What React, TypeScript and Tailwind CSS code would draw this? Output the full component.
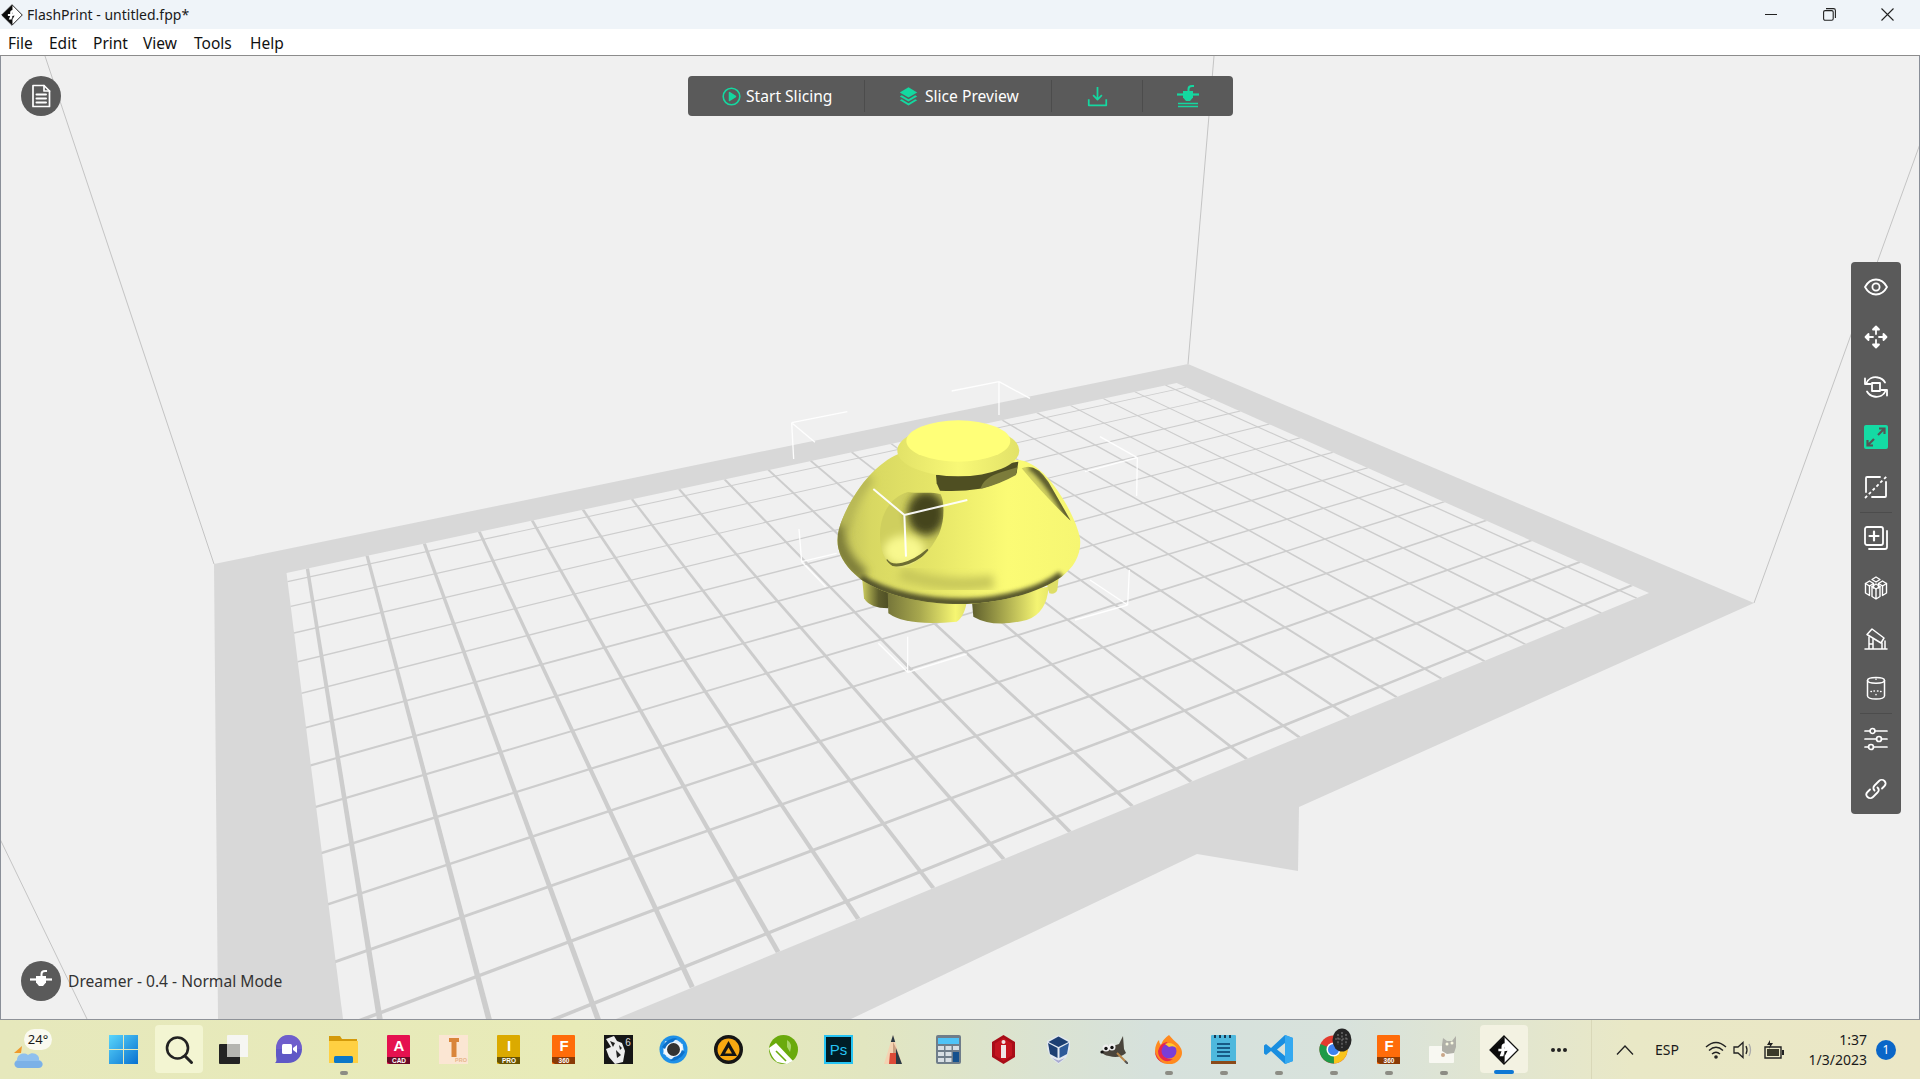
import React from "react";

const G = 0.4371, H = -0.4713;
const P = (u: number, v: number) => {
  const w = 1 + G * u + H * v;
  return [(1404.4 * u - 98.3 * v + 286.5) / w, (-22.6 * u + 22.3 * v + 573) / w];
};
const quad = (u0: number, v0: number, u1: number, v1: number) =>
  [P(u0, v0), P(u1, v0), P(u1, v1), P(u0, v1)].map((p) => `${p[0].toFixed(1)},${p[1].toFixed(1)}`).join(" ");
const uLines = Array.from({ length: 21 }, (_, k) => 0.0165 + 0.0483 * k);
const vLines = Array.from({ length: 13 }, (_, k) => 0.0294 + 0.0788 * k);

const BOX = [
  "M717 65L575 93M717 65L810 115M717 65L717 165",
  "M95 188L262 155M95 188L165 247M95 188L101 297",
  "M1132 293L1020 230M1132 293L975 335M1132 293L1130 408",
  "M125 605L117 507M125 605L230 580M125 605L197 680",
  "M1103 735L1108 630M1103 735L990 660M1103 735L945 780",
  "M443 937L443 830M443 937L355 850M443 937L620 882",
];

const DOME = "M415 282C350 310 290 380 250 470C235 505 228 535 235 565C245 610 280 640 305 660C380 710 500 735 620 732C740 728 850 690 905 650C945 620 965 580 960 535C950 480 900 390 850 340C820 310 790 300 775 300Z";
const HOLE = "M360 525C360 460 395 408 445 396C480 402 515 394 542 403C555 430 554 480 537 522C512 572 472 614 418 628C383 617 360 585 360 525Z";
const RHOLE = "M785 325Q825 305 865 365L932 482Q860 415 785 325Z";

function Model() {
  return (
    <g transform="translate(760 360) scale(0.33333)">
      <path d="M305 640L312 715Q330 745 385 745L400 690Z" fill="url(#f1)" />
      <path d="M383 690L385 760Q440 800 590 785Q615 770 622 715Z" fill="url(#f2)" />
      <path d="M635 715L640 770Q700 805 800 780Q860 760 866 680Z" fill="url(#f3)" />
      <path d="M860 670L868 700Q885 705 892 690L897 645Z" fill="#dede66" />
      <path d={DOME} fill="url(#dome)" />
      <g clipPath="url(#domeClip)">
        <path d="M240 480C225 530 235 590 310 650" fill="none" stroke="#7c7c38" strokeWidth="42" filter="url(#b12)" />
        <path d="M300 655C380 705 500 730 620 728C740 724 850 690 905 645" fill="none" stroke="#55552a" strokeWidth="26" filter="url(#b6)" />
        <path d="M330 350C290 390 262 450 250 500" fill="none" stroke="#b6b654" strokeWidth="36" filter="url(#b12)" />
        <path d="M420 640C500 670 600 680 700 665" fill="none" stroke="#c8c85a" strokeWidth="40" filter="url(#b12)" />
      </g>
      <path d={HOLE} fill="#cfcf5e" />
      <g clipPath="url(#holeClip)">
        <ellipse cx="498" cy="460" rx="56" ry="66" fill="#45451f" filter="url(#b12)" />
        <ellipse cx="432" cy="572" rx="62" ry="46" fill="#f8f88e" filter="url(#b12)" />
        <path d="M378 600C395 627 450 617 505 570" fill="none" stroke="#6d6d32" strokeWidth="9" filter="url(#b2)" />
      </g>
      <path d="M528 345L775 305L770 340Q720 372 660 386Q600 396 540 392L530 370Z" fill="#4f4f22" />
      <path d="M662 384Q672 352 725 336L772 322L768 345Q720 372 665 386Z" fill="#7c7c3a" filter="url(#b2)" />
      <path d={RHOLE} fill="#d0d060" />
      <g clipPath="url(#rholeClip)">
        <path d="M810 318Q860 350 935 490" fill="none" stroke="#56562a" strokeWidth="22" filter="url(#b6)" />
      </g>
      <ellipse cx="595" cy="272" rx="183" ry="77" fill="url(#rim)" />
      <ellipse cx="595" cy="243" rx="156" ry="62" fill="#ffff78" />
      <g stroke="#ffffff" fill="none" opacity="0.95">
        {BOX.map((d) => (
          <path key={d} d={d} strokeWidth="4" />
        ))}
        <path d="M433 465L340 387M433 465L622 420M433 465L438 590" strokeWidth="6" />
      </g>
    </g>
  );
}

function Scene() {
  return (
    <svg viewBox="0 56 1920 963" className="absolute -left-px top-0 w-[1920px] h-[963px]">
      <defs>
        <filter id="b2" x="-30%" y="-30%" width="160%" height="160%"><feGaussianBlur stdDeviation="2" /></filter>
        <filter id="b6" x="-30%" y="-30%" width="160%" height="160%"><feGaussianBlur stdDeviation="6" /></filter>
        <filter id="b12" x="-50%" y="-50%" width="200%" height="200%"><feGaussianBlur stdDeviation="13" /></filter>
        <clipPath id="domeClip"><path d={DOME} /></clipPath>
        <clipPath id="holeClip"><path d={HOLE} /></clipPath>
        <clipPath id="rholeClip"><path d={RHOLE} /></clipPath>
        <linearGradient id="dome" gradientUnits="userSpaceOnUse" x1="232" y1="0" x2="960" y2="0">
          <stop offset="0" stopColor="#c0c05a" />
          <stop offset="0.14" stopColor="#d8d862" />
          <stop offset="0.4" stopColor="#e6e668" />
          <stop offset="0.7" stopColor="#fbfb75" />
          <stop offset="1" stopColor="#f6f672" />
        </linearGradient>
        <linearGradient id="f1" gradientUnits="userSpaceOnUse" x1="305" y1="0" x2="390" y2="0">
          <stop offset="0" stopColor="#d2d260" />
          <stop offset="0.6" stopColor="#5e5e2c" />
          <stop offset="1" stopColor="#4c4c24" />
        </linearGradient>
        <linearGradient id="f2" gradientUnits="userSpaceOnUse" x1="385" y1="0" x2="622" y2="0">
          <stop offset="0" stopColor="#77773a" />
          <stop offset="0.4" stopColor="#a8a84e" />
          <stop offset="0.85" stopColor="#f6f672" />
          <stop offset="1" stopColor="#e0e068" />
        </linearGradient>
        <linearGradient id="f3" gradientUnits="userSpaceOnUse" x1="635" y1="0" x2="866" y2="0">
          <stop offset="0" stopColor="#5e5e2c" />
          <stop offset="0.4" stopColor="#a5a54c" />
          <stop offset="0.85" stopColor="#f4f472" />
          <stop offset="1" stopColor="#e8e86a" />
        </linearGradient>
        <linearGradient id="rim" gradientUnits="userSpaceOnUse" x1="412" y1="0" x2="778" y2="0">
          <stop offset="0" stopColor="#e2e268" />
          <stop offset="0.5" stopColor="#f8f876" />
          <stop offset="1" stopColor="#e2e268" />
        </linearGradient>
      </defs>
      <rect x="0" y="56" width="1920" height="963" fill="#f0f0f0" />
      <g stroke="#c4c4c4" strokeWidth="1" fill="none">
        <path d="M45 56L214 564" />
        <path d="M1214 56L1188 364" />
        <path d="M1754 603L1920 144" />
        <path d="M0 839L87 1019" />
      </g>
      <path d="M214 564L1188 364L1754 603L1299 807L1298 871L1197 854L851 1019L218 1019Z" fill="#d8d8d8" />
      <path d="M286.5 573L1176.6 383L1649 593L616 1019L343 1019Z" fill="#f0f0f0" />
      <g fill="#cdcdcd">
        {uLines.map((u) => (
          <polygon key={u} points={quad(u - 0.0013, 0, u + 0.0013, 1)} />
        ))}
        {vLines.map((v) => (
          <polygon key={v} points={quad(0, v - 0.002, 1, v + 0.002)} />
        ))}
      </g>
      <Model />
    </svg>
  );
}

const Ic = ({ children, s = 24, c = "#fff", w = 1.8 }: { children: React.ReactNode; s?: number; c?: string; w?: number }) => (
  <svg width={s} height={s} viewBox="0 0 24 24" fill="none" stroke={c} strokeWidth={w} strokeLinecap="round" strokeLinejoin="round">
    {children}
  </svg>
);

const HeadIcon = ({ c, lines }: { c: string; lines?: boolean }) => (
  <svg width="24" height="24" viewBox="0 0 24 24" fill="none">
    <path d="M1 10.5H23" stroke={c} strokeWidth="2.2" />
    <path d="M7 7H17V13.5L14 17H10L7 13.5Z" fill={c} />
    <path d="M12.5 8V5Q12.5 2 16 2H18" stroke={c} strokeWidth="2" />
    {lines && <path d="M2 19.5H22M2 22.5H22" stroke={c} strokeWidth="1.3" />}
  </svg>
);

const SIDE: React.ReactNode[] = [
  <Ic key="eye"><path d="M1 12C4 6.5 8 4.5 12 4.5S20 6.5 23 12C20 17.5 16 19.5 12 19.5S4 17.5 1 12Z" /><circle cx="12" cy="12" r="3.6" /></Ic>,
  <Ic key="move"><path d="M12 4V9M12 15V20M4 12H9M15 12H20" /><path d="M9 4.5L12 1.5L15 4.5Z M9 19.5L12 22.5L15 19.5Z M4.5 9L1.5 12L4.5 15Z M19.5 9L22.5 12L19.5 15Z" fill="#fff" /></Ic>,
  <Ic key="rot"><rect x="8" y="8" width="8" height="8" /><path d="M2 9C4 3.5 9 1.5 14 2.5C17 3 19.5 5 21 7.5M22 15C20 20.5 15 22.5 10 21.5C7 21 4.5 19 3 16.5" /><path d="M1 3.5V9H6.5M23 20.5V15H17.5" /></Ic>,
  <svg key="scale" width="24" height="24" viewBox="0 0 24 24" fill="none"><rect width="24" height="24" rx="2" fill="#14dba4" /><path d="M14 10L20 4M15 3.5H20.5V9M10 14L4 20M3.5 15V20.5H9" stroke="#555" strokeWidth="2.2" /></svg>,
  <Ic key="mirror"><path d="M16 2H3A1 1 0 0 0 2 3V17M8 22H21A1 1 0 0 0 22 21V7" /><path d="M1 23L23 1" strokeDasharray="3 2.4" strokeLinecap="butt" /></Ic>,
  <Ic key="add"><rect x="1" y="1" width="18" height="18" rx="2" /><path d="M10 5.5V14.5M5.5 10H14.5" strokeWidth="2.2" /><path d="M23 5V21A2 2 0 0 1 21 23H5" /></Ic>,
  <Ic key="cubes" w={1.4}><path d="M12 1L16 3.5L12 6L8 3.5Z M5.5 5L9.5 7.5L5.5 10L1.5 7.5Z M18.5 5L22.5 7.5L18.5 10L14.5 7.5Z M12 8L16 10.5L12 13L8 10.5Z" /><path d="M1.5 7.5V17L5.5 19.5V10M9.5 7.5V12M14.5 7.5V12M22.5 7.5V17L18.5 19.5V10M8 10.5V20.5L12 23V13M16 10.5V20.5L12 23" /></Ic>,
  <Ic key="sup" w={1.5}><path d="M3 8.5L8 3L20 12L17 17Z" /><path d="M1 23H23M5 23V11M9 23V13.5M18 23V17M21 23V15M5 18H9" /></Ic>,
  <Ic key="cyl" w={1.5}><path d="M3.5 4.5C3.5 0.5 20.5 0.5 20.5 4.5V20C20 24 4 24 3.5 20Z" /><path d="M3.5 4.5C3.5 8 20.5 8 20.5 4.5" /><path d="M12 3V3.3M7 15.5H7.4M10 15H10.4M13.5 15H14M16.6 15.5H17M12 18.5V18.8" /></Ic>,
  <Ic key="sliders" w={1.7}><path d="M1 4H6M11 4H23M1 12H12.5M17.5 12H23M1 20H4.5M9.5 20H23" /><circle cx="8.5" cy="4" r="2.5" /><circle cx="15" cy="12" r="2.5" /><circle cx="7" cy="20" r="2.5" /></Ic>,
  <Ic key="link"><path d="M10.5 13.5C9 12 9 10 10.5 8.5L15 4C16.5 2.5 19 2.5 20.5 4S22 7.5 20.5 9L18 11.5" /><path d="M13.5 10.5C15 12 15 14 13.5 15.5L9 20C7.5 21.5 5 21.5 3.5 20S2 16.5 3.5 15L6 12.5" /></Ic>,
];

const SideCell = ({ children }: { children: React.ReactNode }) => (
  <div className="w-[50px] h-[50px] flex items-center justify-center">{children}</div>
);
const SideSep = () => <div className="h-0 border-t border-[#4c4c4c] mx-[9px]" />;

function SideBar() {
  return (
    <div className="absolute left-[1850px] top-[206px] w-[50px] h-[552px] bg-[#5a5a5a] rounded-[4px]">
      {SIDE.slice(0, 5).map((x, i) => <SideCell key={i}>{x}</SideCell>)}
      <SideSep />
      {SIDE.slice(5, 9).map((x, i) => <SideCell key={i}>{x}</SideCell>)}
      <SideSep />
      {SIDE.slice(9).map((x, i) => <SideCell key={i}>{x}</SideCell>)}
    </div>
  );
}

function TopBar() {
  const green = "#14d8a0";
  return (
    <div className="absolute left-[687px] top-[20px] w-[545px] h-[40px] bg-[#5a5a5a] rounded-[4px] flex items-stretch py-1 text-white text-[15.6px] leading-[32px]">
      <div className="w-[177px] flex items-center pl-[34px] gap-[5px] border-r border-[#4c4c4c]">
        <Ic s={19} c={green} w={2}><circle cx="12" cy="12" r="10.5" /><path d="M9.5 7L17 12L9.5 17Z" fill={green} /></Ic>
        <span>Start Slicing</span>
      </div>
      <div className="w-[187px] flex items-center pl-[34px] gap-[7px] border-r border-[#4c4c4c]">
        <svg width="19" height="20" viewBox="0 0 24 24" fill={green}>
          <path d="M12 1L23 7.5L12 14L1 7.5Z" />
          <path d="M3.5 11L12 16L20.5 11L23 12.5L12 19L1 12.5Z" />
          <path d="M3.5 16L12 21L20.5 16L23 17.5L12 24L1 17.5Z" />
        </svg>
        <span>Slice Preview</span>
      </div>
      <div className="w-[91px] flex items-center justify-center border-r border-[#4c4c4c]">
        <Ic s={21} c={green} w={2}><path d="M12 1V15M7 10.5L12 15.5L17 10.5M2 15V22H22V15" strokeLinecap="butt" /></Ic>
      </div>
      <div className="w-[90px] flex items-center justify-center">
        <HeadIcon c={green} lines />
      </div>
    </div>
  );
}

const FlashLogo = ({ s = 24 }: { s?: number }) => (
  <svg width={s} height={s} viewBox="0 0 24 24">
    <path d="M12 0.8L23.2 12L12 23.2L0.8 12Z" fill="#fff" stroke="#111" strokeWidth="1" />
    <path d="M12.5 0.8L0.8 12L12.5 23.2Z" fill="#0b0b0b" />
    <path d="M16 6.5H13Q10 6.5 10 9.5V11H7.5V13H10L8.5 17H11.5L12.5 13H14.5L15.5 11H12.5V10Q12.5 8.8 13.8 8.8H15.5Z" fill="#fff" />
    <path d="M12.5 13V17L14.8 12.5Z" fill="#0b0b0b" />
  </svg>
);

const Sv = ({ children, s = 29 }: { children: React.ReactNode; s?: number }) => (
  <svg width={s} height={s} viewBox="0 0 29 29">{children}</svg>
);
const T = (p: { x: number; y: number; s: number; c?: string; w?: number; children: string; f?: string }) => (
  <text x={p.x} y={p.y} fontSize={p.s} fill={p.c ?? "#fff"} fontWeight={p.w ?? 700} textAnchor="middle" fontFamily={p.f ?? "Liberation Sans, sans-serif"}>{p.children}</text>
);

const Book = ({ main, side, band, letter, sub }: { main: string; side: string; band: string; letter: string; sub: string }) => (
  <Sv>
    <path d="M3 3L7 0H25V29H7L3 26Z" fill={side} />
    <rect x="3" y="0" width="23" height="29" rx="1" fill={main} />
    <path d="M3 22H26V29H6L3 27Z" fill={band} />
    <T x={15} y={16} s={15}>{letter}</T>
    <T x={15} y={28} s={6.5}>{sub}</T>
  </Sv>
);

const BAR: { el: React.ReactNode; dot?: boolean }[] = [
  { el: <Sv><defs><linearGradient id="w1" x1="0" y1="0" x2="1" y2="1"><stop offset="0" stopColor="#5ad6fb" /><stop offset="1" stopColor="#0770d0" /></linearGradient></defs><path d="M0 0H14V14H0ZM15 0H29V14H15ZM0 15H14V29H0ZM15 15H29V29H15Z" fill="url(#w1)" /></Sv> },
  { el: <svg width="30" height="30" viewBox="0 0 30 30" fill="none" stroke="#222" strokeWidth="2.6" strokeLinecap="round"><circle cx="13.5" cy="13" r="10.5" /><path d="M21 21L27.5 27.5" strokeWidth="3" /></svg> },
  { el: <Sv><rect x="8" y="0" width="22" height="22" rx="1" fill="#f6f6f2" /><rect x="0" y="9" width="21" height="20" rx="1" fill="#232323" /><rect x="8" y="9" width="13" height="13" fill="#b5b5b0" /></Sv> },
  { el: <Sv><path d="M14.5 0C22.5 0 28 6 28 14C28 22 22 28 14 28H1C3.5 26.5 2 23 2 20V14C2 6 7 0 14.5 0Z" fill="#5f58c6" /><path d="M14.5 0C22.5 0 28 6 28 14H2C2 6 7 0 14.5 0Z" fill="#7a62d0" opacity="0.6" /><rect x="8" y="9" width="10" height="10" rx="1.5" fill="#fff" /><path d="M19 13L23 10V18L19 15Z" fill="#fff" /></Sv> },
  { dot: true, el: <Sv><path d="M0 1H11L13 4H28V8H0Z" fill="#d49a0a" /><path d="M0 6H29V28H0Z" fill="#ffd042" /><rect x="5" y="21" width="19" height="7" rx="1.5" fill="#0d78c8" /></Sv> },
  { el: <Book main="#e5114f" side="#7a0c2d" band="#6a0a26" letter="A" sub="CAD" /> },
  { el: <Sv><rect width="29" height="29" fill="#fbe6d3" /><path d="M10 3H20V7H17.5V22H12.5V7H10Z" fill="#d9853a" /><T x={22} y={27} s={5.5} c="#e8b58a">PRO</T></Sv> },
  { el: <Book main="#dbaa00" side="#c69a10" band="#6a5400" letter="I" sub="PRO" /> },
  { el: <Book main="#ff6c0a" side="#ff9a3d" band="#8a3a05" letter="F" sub="360" /> },
  { el: <Sv><rect width="29" height="29" fill="#161616" /><path d="M2 4L10 1L13 6L18 8L21 16L19 27L11 29L5 22L2 14L7 12Z" fill="#eee" /><path d="M6 6L11 8L9 12ZM12 15L17 20L13 23ZM15 10L18 13L16 15Z" fill="#222" /><T x={24} y={11} s={10} c="#ddd" w={400}>6</T></Sv> },
  { el: <Sv><circle cx="14.5" cy="14.5" r="14" fill="#1e90e8" /><circle cx="14.5" cy="14.5" r="10" fill="#dcefff" /><path d="M6 6L24 9L20 24L4 19Z" fill="#fff" opacity="0.7" /><circle cx="14.5" cy="14.5" r="6.5" fill="#333" /><path d="M3 12Q8 3 18 3L14 7Q8 8 6 14ZM26 17Q21 26 11 26L15 22Q21 21 23 15Z" fill="#0d6fc8" /></Sv> },
  { el: <Sv><circle cx="14.5" cy="14.5" r="14.5" fill="#151515" /><circle cx="14.5" cy="14.5" r="11" fill="#f9a811" /><path d="M14.5 6L23 21H6Z" fill="#151515" /><path d="M14.5 12.5L18 18.5H11Z" fill="#f9a811" /></Sv> },
  { el: <Sv><circle cx="14.5" cy="14.5" r="14.5" fill="#6aaa0c" /><path d="M0 13L7 8L24 26L18 29L8 27Q2 22 0 13Z" fill="#fff" /><path d="M7 16L17 26" stroke="#6aaa0c" strokeWidth="1.6" /><path d="M18 5Q24 8 21 17L18 12Z" fill="#a7d466" /></Sv> },
  { el: <Sv><rect width="29" height="29" fill="#26c4f3" /><rect x="2" y="2" width="25" height="25" fill="#001d26" /><T x={14.5} y={20} s={15} c="#26c4f3" w={400}>Ps</T></Sv> },
  { el: <Sv><path d="M14 0L23 29H5Z" fill="#f4d2b2" /><path d="M14 0L16.2 7H11.8Z" fill="#2b3a45" /><path d="M17 13L23 29H17Z" fill="#2b3a45" /><path d="M11 18L17 18V29H10Z" fill="#dc4a38" /><path d="M14 7L17 13V18H14Z" fill="#c89e80" /></Sv> },
  { el: <Sv><rect x="2" y="0" width="25" height="29" rx="2" fill="#6f7d8a" /><rect x="4" y="3" width="21" height="6" fill="#4fc3f7" /><path d="M4 11H10V15H4ZM11.5 11H17.5V15H11.5ZM19 11H25V15H19ZM4 17H10V21H4ZM11.5 17H17.5V21H11.5ZM4 23H10V27H4ZM11.5 23H17.5V27H11.5Z" fill="#d8dfe4" /><rect x="19" y="17" width="6" height="10" fill="#15518e" /></Sv> },
  { el: <Sv><path d="M14.5 0L26 7V22L14.5 29L3 22V7Z" fill="#a80d18" /><path d="M14.5 3L23 8.5V20.5L14.5 26L6 20.5V8.5Z" fill="#c3141f" /><path d="M12 10H17V23H12Z" fill="#f0e6e6" /><circle cx="14.5" cy="7" r="2" fill="#f0e6e6" /></Sv> },
  { el: <Sv><path d="M14.5 0L26 6V14L22 23L14.5 29L7 23L3 14V6Z" fill="#e2e8f0" /><path d="M14.5 1.5L24.5 7L14.5 12L4.5 7Z" fill="#1d3f73" /><path d="M4 8L13.5 13V23L6 19Z" fill="#1d3f73" /><path d="M25 8L15.5 13V23L23 19Z" fill="#2e5a9a" /><path d="M8 23L14.5 28L21 23L14.5 25.5Z" fill="#a7a9d0" /></Sv> },
  { el: <Sv><path d="M3 17Q5 9 14 11L20 9L24 1L25 14L27 18Q20 24 10 21Q4 20 3 17Z" fill="#4a453c" /><circle cx="7" cy="13" r="3.5" fill="#eee" /><circle cx="13" cy="12" r="3.5" fill="#eee" /><circle cx="7" cy="13.5" r="1.7" fill="#111" /><circle cx="13" cy="12.5" r="1.7" fill="#111" /><circle cx="3" cy="17" r="1.6" fill="#111" /><path d="M18 18L27 27" stroke="#b98648" strokeWidth="2" /><path d="M26 26L29 29" stroke="#555" strokeWidth="2" /></Sv> },
  { dot: true, el: <Sv><path d="M15 0Q19 5 24 9Q30 16 27 22C24 28 18 30 13 29C6 28 1 23 1 16C1 11 3 7 5 5Q5 8 7 10Q9 4 15 0Z" fill="#ff8a1f" /><path d="M1 16C2 22 8 29 13 29C6 28 1 23 1 16ZM4 16Q6 8 13 7L14 10Q8 12 9 19Q12 25 19 24Q14 28 9 25Q4 22 4 16Z" fill="#e8274d" /><circle cx="15" cy="16" r="7.5" fill="#7b3dd6" /><path d="M11 9Q18 6 23 13Q19 10 15 12Z" fill="#ffcb2e" /></Sv> },
  { dot: true, el: <Sv><rect x="2" y="0" width="25" height="27" rx="1" fill="#4eb8dd" /><rect x="2" y="26" width="25" height="3" fill="#8a4a1a" /><path d="M6 0V3M11 0V3M16 0V3M21 0V3" stroke="#173a55" strokeWidth="2" /><path d="M8 9H21M8 13H21M8 17H21M8 21H21" stroke="#175a85" strokeWidth="1.8" /></Sv> },
  { dot: true, el: <Sv><path d="M21 0L29 3V26L21 29L7 16L2 20L0 18.5V10.5L2 9L7 13ZM21 8L13 14.5L21 21Z" fill="#1a8ee0" /><path d="M21 0L29 3V26L21 29Z" fill="#35a9f0" /></Sv> },
  { dot: true, el: (
    <div className="relative">
      <Sv><circle cx="14.5" cy="14.5" r="14" fill="#e33b2e" /><path d="M14.5 14.5L27 8A14 14 0 0 1 15 28.5Z" fill="#f8c41c" /><path d="M14.5 14.5L15 28.5A14 14 0 0 1 1.5 9Z" fill="#1e9a48" /><circle cx="14.5" cy="14.5" r="7" fill="#fff" /><circle cx="14.5" cy="14.5" r="5.5" fill="#3d82ef" /></Sv>
      <svg width="20" height="24" viewBox="0 0 20 24" className="absolute -right-[4px] -top-[7px]"><ellipse cx="10" cy="12" rx="9.5" ry="11.5" fill="#262626" /><path d="M6 6V17M10 4V20M14 6V17M3 11H17" stroke="#777" strokeWidth="1.2" strokeDasharray="2 1.6" /></svg>
    </div>
  ) },
  { dot: true, el: <Book main="#ff6c0a" side="#ff9a3d" band="#8a3a05" letter="F" sub="360" /> },
  { dot: true, el: <Sv><rect x="0" y="11" width="25" height="17" rx="1" fill="#f8f8f2" /><path d="M13 10L14 3L18 6H23L27 1V12L25 18L18 19L13 16Z" fill="#b0b0a8" /><circle cx="18" cy="9" r="1.5" fill="#f8f8e0" /><circle cx="23" cy="8" r="1.5" fill="#f8f8e0" /><circle cx="14" cy="20" r="2" fill="#c9a78a" /></Sv> },
  { el: <FlashLogo s={30} /> },
  { el: <svg width="18" height="6" viewBox="0 0 18 6" fill="#222"><circle cx="3" cy="3" r="2" /><circle cx="9" cy="3" r="2" /><circle cx="15" cy="3" r="2" /></svg> },
];

function Taskbar() {
  return (
    <div className="h-[60px] border-t border-[#8e9298] flex items-center text-[#1a1a1a] bg-[linear-gradient(90deg,#e6e8bc_0%,#e8ebb8_30%,#e2e6c0_45%,#d6e1dc_60%,#d8e2dc_70%,#e9e8c6_85%,#ebe7c6_100%)]">
      <div className="w-[96px] relative h-full flex items-center pl-[13px]">
        <svg width="31" height="28" viewBox="0 0 31 28" className="mt-[10px]">
          <path d="M1 12L9 5L8 12Z" fill="#f09a2a" />
          <path d="M6 27C1 27 0 21 4 19C4 13 11 11 15 14C20 10 27 14 26 19C31 20 31 27 25 27Z" fill="#8fc0ee" />
          <path d="M6 27C1 27 0 21 4 20H27C31 22 30 27 25 27Z" fill="#6ea6e2" opacity="0.6" />
        </svg>
        <div className="absolute left-[24px] top-[9px] w-[28px] h-[21px] rounded-full bg-[#fafaf0] flex items-center justify-center text-[13px] leading-none">24°</div>
      </div>
      <div className="flex h-full items-stretch">
        {BAR.map((b, i) => (
          <div key={i} className={i === 25 ? "w-[55px] ml-[5px] relative flex items-center justify-center" : "w-[55px] relative flex items-center justify-center"}>
            {(i === 1 || i === 25) && (
              <div className={i === 1 ? "absolute left-[4px] top-[5px] w-[48px] h-[48px] rounded-[4px] bg-[#f3f5d2]" : "absolute left-[4px] top-[5px] w-[48px] h-[48px] rounded-[4px] bg-[#f3f2e2]"} />
            )}
            <div className="relative">{b.el}</div>
            {b.dot && <div className="absolute left-[24px] top-[51px] w-[8px] h-[4px] rounded-full bg-[#8c8c84]" />}
            {i === 25 && <div className="absolute left-[18px] top-[50px] w-[20px] h-[4px] rounded-full bg-[#0f78d4]" />}
          </div>
        ))}
      </div>
      <div className="w-[5px] h-full" />
      <div className="h-full border-l border-[#d9d8b8] flex items-center flex-1 relative">
        <svg width="18" height="10" viewBox="0 0 18 10" fill="none" stroke="#222" strokeWidth="1.3" className="ml-[24px]"><path d="M1 9.5L9 1L17 9.5" /></svg>
        <span className="ml-[21px] text-[14px]">ESP</span>
        <svg width="22" height="18" viewBox="0 0 22 18" fill="none" stroke="#222" strokeWidth="1.4" className="ml-[26px]"><path d="M1 6Q11 -3 21 6M4 9.5Q11 3 18 9.5M7 13Q11 9.5 15 13" /><circle cx="11" cy="16" r="1.1" fill="#222" /></svg>
        <svg width="20" height="18" viewBox="0 0 20 18" fill="none" stroke="#222" strokeWidth="1.3" className="ml-[6px]"><path d="M1 6H5L10 1.5V16.5L5 12H1Z" /><path d="M13 5Q15 9 13 13" /><path d="M16 3Q19 9 16 15" stroke="#aaa" /></svg>
        <svg width="22" height="20" viewBox="0 0 22 20" className="ml-[11px]"><path d="M1 7H17V18H1Z" fill="none" stroke="#222" strokeWidth="1.4" /><path d="M3 9H15V16H3Z" fill="#3a3a2a" /><path d="M18 10H20V15H18Z" fill="#222" /><path d="M6 0L3 5H6L5 9L9 3H6Z" fill="#222" /></svg>
        <div className="absolute right-[53px] top-0 h-full flex flex-col items-end justify-center text-[14px] leading-[20px]">
          <span>1:37</span>
          <span>1/3/2023</span>
        </div>
        <div className="absolute right-[24px] top-[20px] w-[20px] h-[20px] rounded-full bg-[#0a66c8] text-white text-[12px] flex items-center justify-center">1</div>
      </div>
    </div>
  );
}

export default function App() {
  return (
    <div className="w-[1920px] h-[1080px] flex flex-col overflow-hidden bg-white font-['Noto_Sans',sans-serif]">
      <div className="h-[29px] bg-[#eff4f9] flex items-center pl-[1px] text-[14px] text-[#1a1a1a]">
        <FlashLogo s={22} />
        <span className="ml-[4px]">FlashPrint - untitled.fpp*</span>
        <div className="ml-auto mr-[4px] flex">
          <div className="w-[58px] flex justify-center">
            <svg width="12" height="12" viewBox="0 0 12 12" stroke="#222" strokeWidth="1"><path d="M0 6.5H12" /></svg>
          </div>
          <div className="w-[58px] flex justify-center">
            <svg width="13" height="13" viewBox="0 0 13 13" fill="none" stroke="#222" strokeWidth="1.1"><rect x="0.6" y="2.6" width="9.6" height="9.6" rx="1.5" /><path d="M3 0.6H10.5Q12.4 0.6 12.4 2.5V10" /></svg>
          </div>
          <div className="w-[58px] flex justify-center">
            <svg width="13" height="13" viewBox="0 0 13 13" stroke="#222" strokeWidth="1.1"><path d="M0.5 0.5L12.5 12.5M12.5 0.5L0.5 12.5" /></svg>
          </div>
        </div>
      </div>
      <div className="h-[27px] bg-white border-b border-[#8c8c8c] flex items-center pl-[8px] pt-[1px] text-[15.5px] leading-[24px] text-[#111]">
        <span className="w-[41px]">File</span>
        <span className="w-[44px]">Edit</span>
        <span className="w-[50px]">Print</span>
        <span className="w-[51px]">View</span>
        <span className="w-[56px]">Tools</span>
        <span>Help</span>
      </div>
      <div className="relative h-[963px] border-x border-[#8a8f98] overflow-hidden">
        <Scene />
        <div className="absolute left-[20px] top-[20px] w-[40px] h-[40px] rounded-full bg-[#5a5a5a] flex items-center justify-center">
          <Ic s={24} w={1.7}><path d="M4 1.5H15L20.5 7V22.5H4Z" /><path d="M15 1.5V7H20.5" /><path d="M7.5 10.5H17M7.5 14.5H17M7.5 18.5H17" strokeWidth="2" /></Ic>
        </div>
        <TopBar />
        <SideBar />
        <div className="absolute left-[20px] bottom-[18px] flex items-center">
          <div className="w-[40px] h-[40px] rounded-full bg-[#5a5a5a] flex items-center justify-center">
            <HeadIcon c="#fff" />
          </div>
          <span className="ml-[7px] pt-[2px] text-[15.6px] text-[#333]">Dreamer - 0.4 - Normal Mode</span>
        </div>
      </div>
      <Taskbar />
    </div>
  );
}
